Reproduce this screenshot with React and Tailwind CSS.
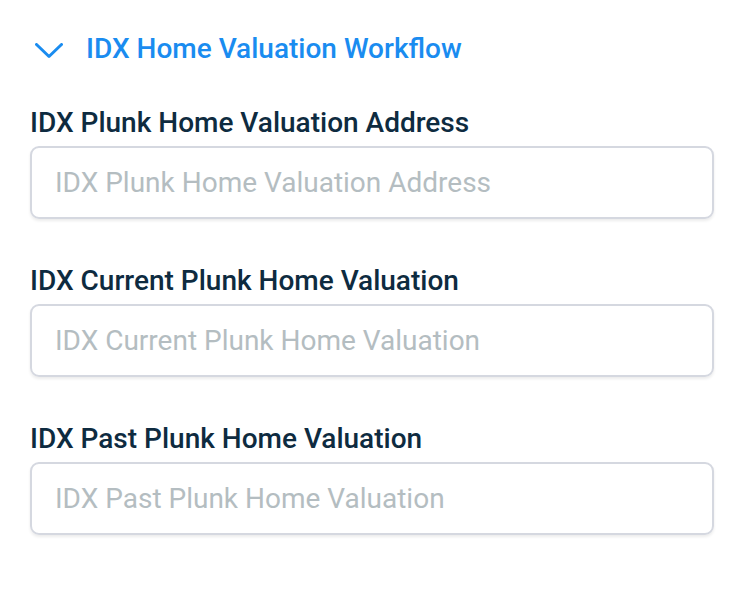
import React from "react";

const fields = [
  "IDX Plunk Home Valuation Address",
  "IDX Current Plunk Home Valuation",
  "IDX Past Plunk Home Valuation",
];

const App = () => {
  return (
    <div className="w-[742px] h-[602px] bg-white font-['Roboto',sans-serif] pl-[30px] pr-[28px] pt-[32px]">
      <div className="flex items-start h-[33px]">
        <svg width="28" height="16" viewBox="0 0 28 16" className="ml-[5px] mt-[11px]">
          <path d="M1.5 1.5 L14 13.5 L26.5 1.5" fill="none" stroke="#1a8cf0" strokeWidth="3" strokeLinecap="round" strokeLinejoin="round" />
        </svg>
        <span className="ml-[23px] text-[28px] leading-[33px] font-medium text-[#1a8cf0]">IDX Home Valuation Workflow</span>
      </div>
      <div className="mt-[41px] flex flex-col gap-[45px]">
        {fields.map((f) => (
          <div key={f} className="flex flex-col">
            <label className="text-[28px] leading-[33px] font-medium text-[#0e2b40]">{f}</label>
            <input
              placeholder={f}
              className="mt-[7px] h-[73px] w-full rounded-[9px] border-2 border-[#d5d8e0] px-[23px] text-[28px] text-[#0e2b40] placeholder:text-[#b4bdc1] shadow-[0_2px_3px_rgba(0,0,0,0.08)] outline-none"
            />
          </div>
        ))}
      </div>
    </div>
  );
};

export default App;
